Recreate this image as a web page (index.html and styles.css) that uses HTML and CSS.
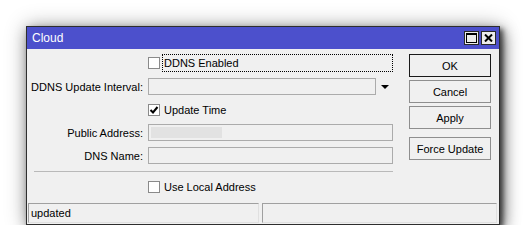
FILE: index.html
```html
<!DOCTYPE html>
<html lang="en">
<head>
  <meta charset="UTF-8" />
  <title>Cloud</title>
  <link rel="stylesheet" href="styles.css">
</head>
<body>
  <div class="window">
    <div class="titlebar">
      <span class="title">Cloud</span>
      <div class="title-buttons">
        <span class="tbtn">
          <svg width="11" height="10" viewBox="0 0 11 10"><rect x="0.5" y="0.5" width="10" height="9" fill="none" stroke="#000"/><rect x="0" y="0" width="11" height="2" fill="#000"/></svg>
        </span>
        <span class="tbtn">
          <svg width="9" height="8" viewBox="0 0 9 8"><path d="M1 0.5 L8 7.5 M8 0.5 L1 7.5" stroke="#000" stroke-width="2"/></svg>
        </span>
      </div>
    </div>

    <div class="content">
      <div class="form">
        <div class="row check-row first">
          <span class="lbl"></span>
          <div class="ctl">
            <span class="box"></span>
            <span class="check-text focused">DDNS Enabled</span>
          </div>
        </div>

        <div class="row field-row">
          <span class="lbl">DDNS Update Interval:</span>
          <div class="ctl">
            <span class="input short"></span>
            <span class="arrow"></span>
          </div>
        </div>

        <div class="row check-row">
          <span class="lbl"></span>
          <div class="ctl">
            <span class="box checked">
              <svg width="10" height="10" viewBox="0 0 10 10"><path d="M1.5 5 L4 7.5 L8.5 2" fill="none" stroke="#000" stroke-width="2"/></svg>
            </span>
            <span class="check-text">Update Time</span>
          </div>
        </div>

        <div class="row field-row tight">
          <span class="lbl">Public Address:</span>
          <div class="ctl">
            <span class="input"><span class="blur"></span></span>
          </div>
        </div>

        <div class="row field-row">
          <span class="lbl">DNS Name:</span>
          <div class="ctl">
            <span class="input"></span>
          </div>
        </div>

        <div class="separator"></div>

        <div class="row check-row">
          <span class="lbl"></span>
          <div class="ctl">
            <span class="box"></span>
            <span class="check-text">Use Local Address</span>
          </div>
        </div>
      </div>

      <div class="buttons">
        <button class="default">OK</button>
        <button>Cancel</button>
        <button>Apply</button>
        <button class="spaced">Force Update</button>
      </div>
    </div>

    <div class="statusbar">
      <div class="panel left">updated</div>
      <div class="panel right"></div>
    </div>
  </div>
</body>
</html>
```

FILE: styles.css
```css
body {
  margin: 0;
  background-color: #fff;
  font-family: "Liberation Sans", Arial, sans-serif;
  font-size: 11px;
  color: #000;
}

.window {
  margin: 26px 0 0 26px;
  width: 472px;
  background-color: #f0f0f0;
  border: 1px solid #2e2e2e;
  box-shadow: 3px 3px 5px rgba(0,0,0,0.6), 4px 6px 14px rgba(0,0,0,0.45), 0 0 20px rgba(0,0,0,0.3);
}

.titlebar {
  height: 22px;
  background-color: #4c50cc;
  display: flex;
  align-items: center;
  justify-content: space-between;
}

.title {
  color: #fff;
  font-size: 12px;
  padding-left: 5px;
}

.title-buttons {
  display: flex;
  gap: 2px;
  padding-right: 3px;
}

.tbtn {
  width: 13px;
  height: 12px;
  border: 1px solid #2a2a2a;
  background-color: #ececec;
  display: flex;
  align-items: center;
  justify-content: center;
}

.content {
  display: flex;
  padding: 5px 0 7px 0;
}

.form {
  width: 366px;
}

.row {
  display: grid;
  grid-template-columns: 121px 245px;
  align-items: center;
}

.check-row {
  height: 18px;
  margin-top: 6px;
}

.field-row {
  height: 17px;
  margin-top: 6px;
}

.first {
  margin-top: 0;
}

.tight {
  margin-top: 5px;
}

.lbl {
  text-align: right;
  padding-right: 5px;
  white-space: nowrap;
}

.ctl {
  display: flex;
  align-items: center;
  height: 100%;
}

.box {
  width: 10px;
  height: 10px;
  border: 1px solid #8a8a8a;
  background-color: #fff;
  display: flex;
  align-items: center;
  justify-content: center;
  margin-right: 2px;
}

.check-text {
  padding-left: 1px;
  line-height: 16px;
  border: 1px solid transparent;
}

.focused {
  width: 228px;
  border: 1px dotted #000;
}

.input {
  width: 243px;
  height: 15px;
  border: 1px solid #ababab;
  background-color: #f0f0f0;
  display: flex;
  align-items: center;
}

.input.short {
  width: 226px;
}

.arrow {
  margin-left: 5px;
  width: 0;
  height: 0;
  border-left: 4px solid transparent;
  border-right: 4px solid transparent;
  border-top: 4px solid #000;
}

.blur {
  margin-left: 2px;
  width: 71px;
  height: 11px;
  background-color: #e2e2e2;
}

.separator {
  margin: 7px 0 0 7px;
  height: 1px;
  background-color: #b9b9b9;
}

.buttons {
  margin-left: 16px;
  width: 82px;
  display: flex;
  flex-direction: column;
  gap: 3px;
}

button {
  height: 23px;
  width: 82px;
  padding: 0;
  font-family: "Liberation Sans", Arial, sans-serif;
  font-size: 11px;
  color: #000;
  background-color: #f0f0f0;
  border: 1px solid #8e8e8e;
}

button.default {
  border-color: #1a1a1a;
}

button.spaced {
  margin-top: 5px;
}

.statusbar {
  display: flex;
  gap: 3px;
  padding: 0 0 1px 1px;
}

.panel {
  height: 18px;
  line-height: 18px;
  border: 1px solid;
  border-color: #a0a0a0 #e0e0e0 #e0e0e0 #a0a0a0;
}

.panel.left {
  width: 227px;
  padding-left: 2px;
}

.panel.right {
  width: 233px;
}
```
